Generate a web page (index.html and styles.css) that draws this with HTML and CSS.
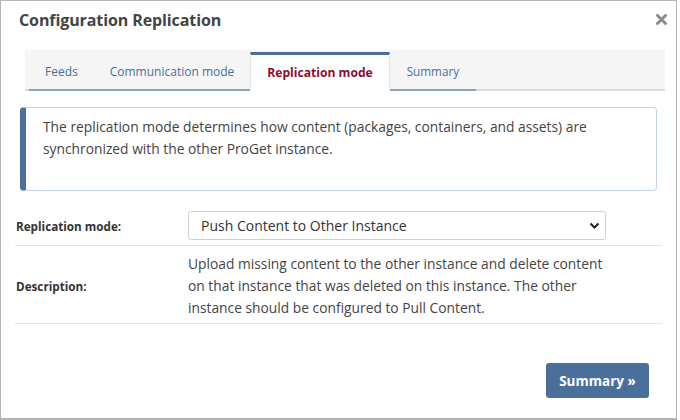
FILE: index.html
```html
<!DOCTYPE html>
<html>
<head>
<meta charset="utf-8">
<link rel="stylesheet" href="styles.css">
</head>
<body>
<div class="dialog">
  <div class="header">
    <h1 class="title">Configuration Replication</h1>
    <svg class="close" width="11" height="11" viewBox="0 0 11 11"><path d="M1.5 1.5 L9.5 9.5 M9.5 1.5 L1.5 9.5" stroke="#8a8a8a" stroke-width="3" stroke-linecap="round"/></svg>
  </div>
  <div class="tabs">
    <div class="tab">Feeds</div>
    <div class="tab">Communication mode</div>
    <div class="tab active">Replication mode</div>
    <div class="tab">Summary</div>
  </div>
  <div class="info">The replication mode determines how content (packages, containers, and assets) are synchronized with the other ProGet instance.</div>
  <div class="form">
    <div class="row">
      <div class="label">Replication mode:</div>
      <div class="field">
        <div class="select">
          <span>Push Content to Other Instance</span>
          <svg class="chev" width="11" height="8" viewBox="0 0 11 8"><path d="M1.5 1.5 L5.5 5.5 L9.5 1.5" fill="none" stroke="#222" stroke-width="2"/></svg>
        </div>
      </div>
    </div>
    <div class="row">
      <div class="label">Description:</div>
      <div class="field desc">Upload missing content to the other instance and delete content on that instance that was deleted on this instance. The other instance should be configured to Pull Content.</div>
    </div>
  </div>
  <div class="footer">
    <button class="btn">Summary &raquo;</button>
  </div>
</div>
</body>
</html>
```
FILE: styles.css
```css
html, body {
  margin: 0;
  padding: 0;
  background: #fff;
}
body {
  font-family: "Open Sans", "Noto Sans", sans-serif;
  color: #444;
}
.dialog {
  width: 677px;
  height: 420px;
  box-sizing: border-box;
  border: 1px solid #b4b4b4;
  border-bottom-width: 2px;
  display: flex;
  flex-direction: column;
}
.header {
  display: flex;
  justify-content: space-between;
  align-items: center;
  height: 38px;
  padding: 0 9px 0 18px;
}
.title {
  margin: 0;
  font-size: 16px;
  font-weight: 700;
  color: #444;
  letter-spacing: -0.1px;
}
.close {
  display: block;
  margin-top: -1px;
}
.tabs {
  margin: 11px 11px 0 24px;
  padding: 3px 0 0 4px;
  background: #f5f5f5;
  border-bottom: 2px solid #d6dbe0;
  display: flex;
  height: 36px;
}
.tab {
  padding: 0 16px;
  font-size: 12px;
  color: #4a6f9a;
  display: flex;
  align-items: center;
  margin-bottom: -2px;
  border-bottom: 2px solid #8fa3b8;
}
.tab.active {
  background: #fff;
  color: #8b0d2e;
  font-weight: 700;
  font-size: 12.1px;
  border-top: 3px solid #4a6f9a;
  border-left: 1px solid #e4e4e4;
  border-right: 1px solid #e4e4e4;
  border-bottom: 2px solid #fff;
  padding: 0 16px;
  margin-top: -1px;
}
.tab:last-child {
  font-size: 11.7px;
  padding: 0 17px;
}
.info {
  margin: 16px 19px 0 19px;
  border: 1px solid #c5d3e3;
  border-left: 6px solid #4a6f9a;
  border-radius: 4px;
  padding: 8px 20px 30px 17px;
  font-size: 13.8px;
  line-height: 22px;
  color: #444;
}
.form {
  margin: 16px 14px 0 14px;
}
.row {
  display: flex;
  align-items: center;
  border-bottom: 1px solid #e3e3e3;
}
.row:first-child {
  padding: 4px 0 5px;
}
.row:last-child {
  padding: 7px 0 4px;
}
.label {
  width: 172px;
  padding-left: 1px;
  font-size: 11.7px;
  font-weight: 700;
  color: #333;
}
.field {
  flex: 1;
  padding-right: 56px;
}
.select {
  height: 29px;
  box-sizing: border-box;
  border: 1px solid #cfcfcf;
  border-radius: 3px;
  display: flex;
  align-items: center;
  justify-content: space-between;
  padding: 0 5px 0 12px;
  font-size: 14px;
  color: #333;
}
.chev {
  display: block;
}
.desc {
  font-size: 13.8px;
  line-height: 22px;
  color: #444;
}
.footer {
  display: flex;
  justify-content: flex-end;
  padding: 39px 27px 0 0;
}
.btn {
  width: 103px;
  height: 35px;
  border: none;
  border-radius: 3px;
  background: #4a6f9a;
  color: #fff;
  font-family: "Open Sans", "Noto Sans", sans-serif;
  font-size: 13.5px;
  font-weight: 700;
  padding: 0;
}
```
